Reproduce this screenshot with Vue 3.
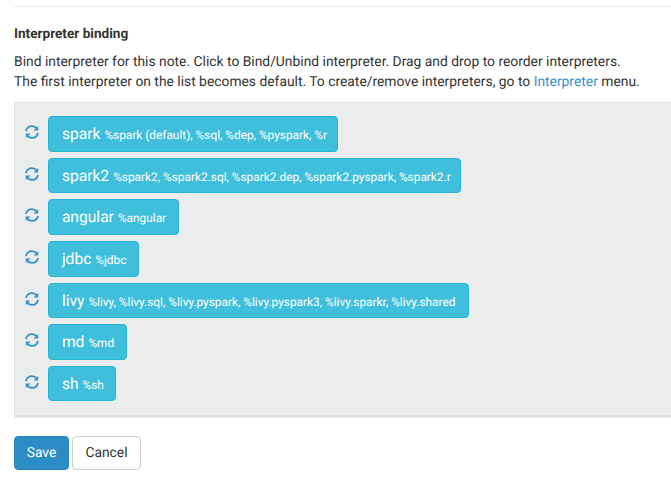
<script setup>
const interpreters = [
  { name: 'spark', list: '%spark (default), %sql, %dep, %pyspark, %r', width: 290 },
  { name: 'spark2', list: '%spark2, %spark2.sql, %spark2.dep, %spark2.pyspark, %spark2.r', width: 413 },
  { name: 'angular', list: '%angular', width: 131 },
  { name: 'jdbc', list: '%jdbc', width: 90.5 },
  { name: 'livy', list: '%livy, %livy.sql, %livy.pyspark, %livy.pyspark3, %livy.sparkr, %livy.shared', width: 421 },
  { name: 'md', list: '%md', width: 78.5 },
  { name: 'sh', list: '%sh', width: 67.5 },
]
</script>

<template>
  <main class="page">
    <hr class="divider" />
    <section class="settings">
      <h4>Interpreter binding</h4>
      <p>
        Bind interpreter for this note. Click to Bind/Unbind interpreter. Drag and drop to reorder interpreters.<br />
        <span>The first interpreter on the list becomes default. To create/remove interpreters, go to <a>Interpreter</a> menu.</span>
      </p>
      <div class="panel">
        <div v-for="item in interpreters" :key="item.name" class="row">
          <svg class="refresh" viewBox="0 0 14 14">
            <path class="arc" d="M1 6C1.7 3.1 4.1 1.1 7 1.1c2 0 3.600.8 4.800 2.200M13 8c-.7 2.900-3.100 4.900-6 4.900-2 0-3.600-.8-4.800-2.200" />
            <path class="head" d="M13.200.9v4.500H8.500zM.8 13.100V8.600h4.700z" />
          </svg>
          <div class="item" :style="{ width: item.width + 'px' }">
            <span class="name">{{ item.name }}</span><small>{{ item.list }}</small>
          </div>
        </div>
      </div>
      <div class="actions">
        <button class="save">Save</button>
        <button class="cancel">Cancel</button>
      </div>
    </section>
  </main>
</template>

<style>
body { background: #fff; overflow: hidden; }
</style>

<style scoped>
* { box-sizing: border-box; }
.page {
  height: 477px;
  padding-top: 6px;
  overflow: hidden;
  font-family: Roboto, sans-serif;
  font-size: 13.85px;
  color: #333;
  text-rendering: geometricPrecision;
}
.divider { height: 1px; margin: 0 0 0 14px; border: 0; background: #ebebeb; }
.settings { padding: 17px 0 0 14px; }
h4 { margin: 0; font-size: 13.6px; font-weight: 700; line-height: 20px; }
p { margin: 8px 0 0; line-height: 20px; white-space: nowrap; }
a { color: #3692cb; }
.panel {
  display: flex;
  flex-direction: column;
  gap: 6px;
  height: 315px;
  margin-top: 10px;
  padding: 13.2px 0 0 10px;
  background: #ebeded;
  border: 1px solid #e0e2e2;
  border-right: 0;
  border-bottom: 2px solid #dddfdf;
  box-shadow: 0 1px 1px #eee;
}
.row { display: flex; height: 35.6px; flex-shrink: 0; }
.refresh { width: 14px; height: 14px; margin: 9px 9.4px 0 0; }
.arc { fill: none; stroke: #3790c8; stroke-width: 1.8; }
.head { fill: #3790c8; }
.item {
  height: 35.6px;
  padding-left: 12.5px;
  background: #3fbfdb;
  border: 1px solid #24b5d4;
  border-radius: 4px;
  color: #fff;
  line-height: 34px;
  white-space: nowrap;
}
.name { font-size: 15.6px; }
small { margin-left: 4px; font-size: 11.87px; }
.actions { display: flex; gap: 3px; margin-top: 19px; }
button {
  height: 34px;
  padding: 0;
  border: 1px solid #2685bd;
  border-radius: 4px;
  font: 13.85px/32px Roboto, sans-serif;
  text-rendering: geometricPrecision;
  color: #fff;
}
.save { width: 55px; background: #2c8dc4; }
.cancel { width: 69px; background: #fff; border-color: #ccc; color: #333; }
</style>
